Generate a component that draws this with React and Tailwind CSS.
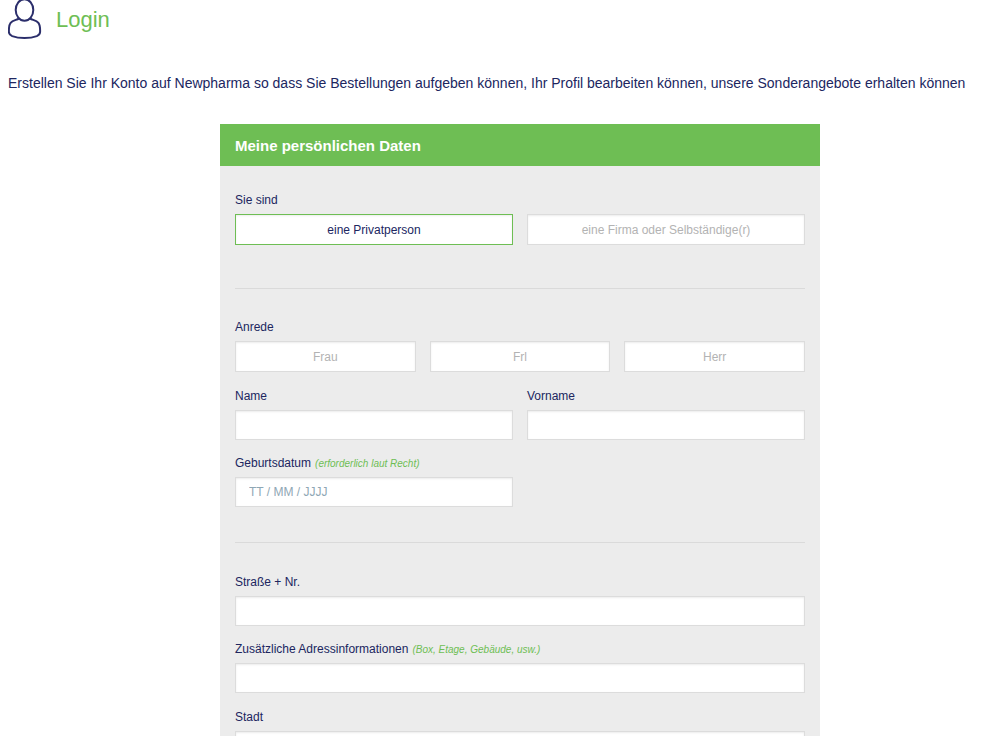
import { useState } from "react";

const inputClass =
  "block h-[30px] w-full border border-[#dcdcdc] bg-white px-[13px] text-xs text-[#20265f] shadow-[inset_0_1px_2px_rgba(0,0,0,0.08)] outline-none placeholder:text-[#8fa7b5] focus:border-[#6ebe54]";

function UserIcon() {
  return (
    <svg
      width="34"
      height="40"
      viewBox="0 0 34 40"
      fill="none"
      stroke="#2b2e6b"
      strokeWidth="2"
      strokeLinejoin="round"
      aria-hidden="true"
    >
      <ellipse cx="16.5" cy="10" rx="8.8" ry="10.8" />
      <path d="M10.8 18.6C8.6 20 4.6 20.3 2.6 22.8C0.9 25 0.8 29 0.9 32C1 34.4 2.2 35.2 4.2 36.1C8 37.6 12 38.1 16.5 38.1C21 38.1 25 37.6 28.8 36.1C30.8 35.2 32 34.4 32.1 32C32.2 29 32.1 25 30.4 22.8C28.4 20.3 24.4 20 22.2 18.6" />
    </svg>
  );
}

function ChoiceGroup({ legend, name, options, value, onChange }) {
  return (
    <fieldset>
      <legend className="mb-[5px] text-xs leading-[18px]">{legend}</legend>

      <div className="flex gap-3.5">
        {options.map((option) => (
          <label
            key={option}
            className="relative flex h-[31px] flex-1 cursor-pointer items-center justify-center border border-[#dcdcdc] bg-white text-xs text-[#b3b3b3] shadow-[inset_0_1px_2px_rgba(0,0,0,0.08)] has-checked:border-[#6ebe54] has-checked:text-[#20265f]"
          >
            <input
              type="radio"
              name={name}
              value={option}
              checked={value === option}
              onChange={() => onChange(option)}
              className="sr-only"
            />
            {option}
          </label>
        ))}
      </div>
    </fieldset>
  );
}

function Field({ id, label, hint, placeholder }) {
  return (
    <div className="flex-1">
      <label htmlFor={id} className="mb-[5px] block text-xs leading-[18px]">
        {label}
        {hint && (
          <em className="ml-1 text-[10px] leading-none text-[#6ebe54]">
            {hint}
          </em>
        )}
      </label>

      <input
        id={id}
        type="text"
        placeholder={placeholder}
        className={inputClass}
      />
    </div>
  );
}

function App() {
  const [customerType, setCustomerType] = useState("eine Privatperson");
  const [title, setTitle] = useState("");

  return (
    <main className="bg-white font-['Liberation_Sans',Arial,sans-serif] text-[#20265f]">
      <header className="flex items-center gap-3.5 pl-2">
        <UserIcon />
        <h1 className="text-[22px] leading-10 text-[#6ebe54]">Login</h1>
      </header>

      <p className="mt-8 pl-2 text-sm leading-[22px]">
        Erstellen Sie Ihr Konto auf Newpharma so dass Sie Bestellungen aufgeben
        können, Ihr Profil bearbeiten können, unsere Sonderangebote erhalten
        können
      </p>

      <div className="mt-[30px] pl-[39px]">
        <form className="mx-auto max-w-[600px] bg-[#ececec]">
          <h2 className="bg-[#6ebe54] px-[15px] pt-0.5 text-[15px] leading-10 font-bold text-white">
            Meine persönlichen Daten
          </h2>

          <div className="px-[15px] pt-[25px] pb-8">
            <ChoiceGroup
              legend="Sie sind"
              name="customerType"
              options={["eine Privatperson", "eine Firma oder Selbständige(r)"]}
              value={customerType}
              onChange={setCustomerType}
            />

            <hr className="mt-[43px] mb-[29px] border-[#dadada]" />

            <ChoiceGroup
              legend="Anrede"
              name="title"
              options={["Frau", "Frl", "Herr"]}
              value={title}
              onChange={setTitle}
            />

            <div className="mt-[15px] flex gap-3.5">
              <Field id="lastName" label="Name" />
              <Field id="firstName" label="Vorname" />
            </div>

            <div className="mt-3.5 grid grid-cols-2 gap-3.5">
              <Field
                id="birthDate"
                label="Geburtsdatum"
                hint="(erforderlich laut Recht)"
                placeholder="TT / MM / JJJJ"
              />
            </div>

            <hr className="mt-[35px] mb-[30px] border-[#dadada]" />

            <Field id="street" label="Straße + Nr." />

            <div className="mt-3.5">
              <Field
                id="addressExtra"
                label="Zusätzliche Adressinformationen"
                hint="(Box, Etage, Gebäude, usw.)"
              />
            </div>

            <div className="mt-[15px]">
              <Field id="city" label="Stadt" />
            </div>
          </div>
        </form>
      </div>
    </main>
  );
}

export default App;
